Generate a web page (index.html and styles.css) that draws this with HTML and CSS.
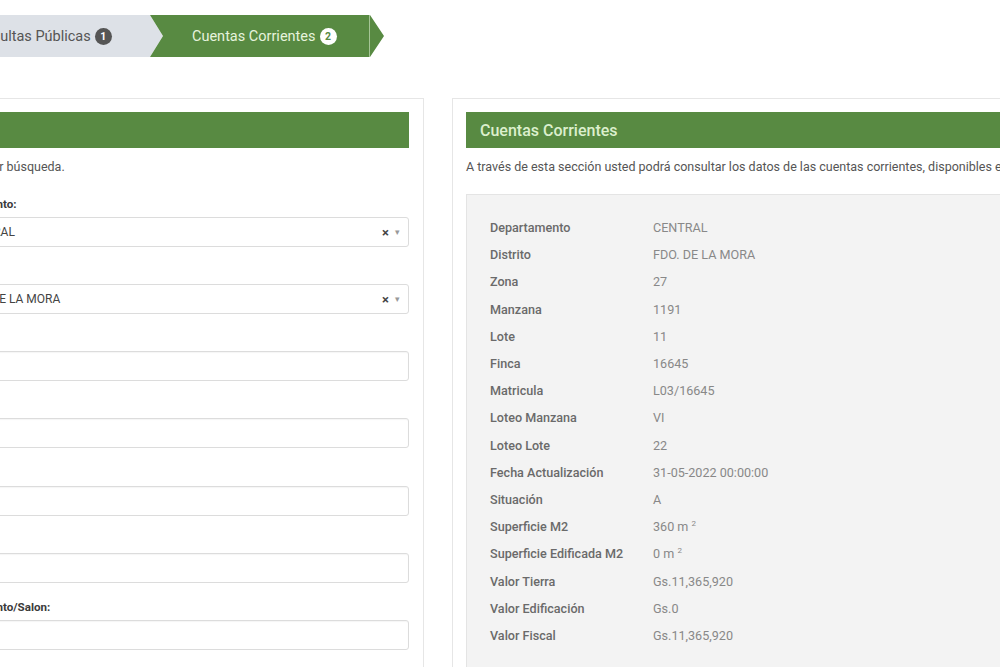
FILE: index.html
```html
<!DOCTYPE html>
<html lang="es">
<head>
<meta charset="utf-8">
<title>Cuentas Corrientes</title>
<link rel="stylesheet" href="styles.css">
</head>
<body>
<div class="page">
  <nav class="steps">
    <div class="step step-done">Consultas Públicas <span class="badge badge-dark">1</span></div>
    <div class="step step-active">Cuentas Corrientes <span class="badge badge-light">2</span></div>
  </nav>

  <div class="columns">
    <section class="card card-left">
      <div class="card-head"><h2>Filtros</h2></div>
      <p class="desc desc-left">Datos para filtrar búsqueda.</p>

      <div class="group">
        <label>Departamento:</label>
        <div class="select"><span>CENTRAL</span><span class="sel-icons"><span class="clear">×</span><span class="caret">▾</span></span></div>
      </div>
      <div class="group">
        <label>Distrito:</label>
        <div class="select"><span>FDO. DE LA MORA</span><span class="sel-icons"><span class="clear">×</span><span class="caret">▾</span></span></div>
      </div>
      <div class="group">
        <label>Zona:</label>
        <div class="input"></div>
      </div>
      <div class="group">
        <label>Manzana:</label>
        <div class="input"></div>
      </div>
      <div class="group g-wide">
        <label>Lote:</label>
        <div class="input"></div>
      </div>
      <div class="group">
        <label>Finca:</label>
        <div class="input"></div>
      </div>
      <div class="group">
        <label>Departamento/Salon:</label>
        <div class="input"></div>
      </div>
    </section>

    <section class="card card-right">
      <div class="card-head"><h2>Cuentas Corrientes</h2></div>
      <p class="desc">A través de esta sección usted podrá consultar los datos de las cuentas corrientes, disponibles en el sistema.</p>
      <div class="data">
        <div class="row"><span class="k">Departamento</span><span class="v">CENTRAL</span></div>
        <div class="row"><span class="k">Distrito</span><span class="v">FDO. DE LA MORA</span></div>
        <div class="row"><span class="k">Zona</span><span class="v">27</span></div>
        <div class="row"><span class="k">Manzana</span><span class="v">1191</span></div>
        <div class="row"><span class="k">Lote</span><span class="v">11</span></div>
        <div class="row"><span class="k">Finca</span><span class="v">16645</span></div>
        <div class="row"><span class="k">Matricula</span><span class="v">L03/16645</span></div>
        <div class="row"><span class="k">Loteo Manzana</span><span class="v">VI</span></div>
        <div class="row"><span class="k">Loteo Lote</span><span class="v">22</span></div>
        <div class="row"><span class="k">Fecha Actualización</span><span class="v">31-05-2022 00:00:00</span></div>
        <div class="row"><span class="k">Situación</span><span class="v">A</span></div>
        <div class="row"><span class="k">Superficie M2</span><span class="v">360 m <sup>2</sup></span></div>
        <div class="row"><span class="k">Superficie Edificada M2</span><span class="v">0 m <sup>2</sup></span></div>
        <div class="row"><span class="k">Valor Tierra</span><span class="v">Gs.11,365,920</span></div>
        <div class="row"><span class="k">Valor Edificación</span><span class="v">Gs.0</span></div>
        <div class="row"><span class="k">Valor Fiscal</span><span class="v">Gs.11,365,920</span></div>
      </div>
    </section>
  </div>
</div>
</body>
</html>
```

FILE: styles.css
```css
* { box-sizing: border-box; }
html, body {
  margin: 0;
  padding: 0;
  background: #ffffff;
  overflow: hidden;
  width: 1000px;
  height: 667px;
}
body {
  font-family: Roboto, "Liberation Sans", Arial, sans-serif;
  color: #555;
}
.page {
  margin-left: -78px;
  padding-top: 15px;
}

/* steps */
.steps {
  display: flex;
  height: 42px;
}
.step {
  display: flex;
  align-items: center;
  font-size: 14.5px;
  height: 42px;
  position: relative;
}
.step-done {
  background: #dde1e7;
  color: #555;
  width: 242px;
  padding-left: 45px;
  clip-path: polygon(0 0, 228px 0, 241px 50%, 228px 100%, 0 100%);
}
.step-active {
  background: #588a42;
  color: #e6f3dc;
  width: 234px;
  margin-left: -14px;
  padding-left: 42px;
  clip-path: polygon(0 0, 220px 0, 234px 50%, 220px 100%, 0 100%, 13px 50%);
}
.step-active::after {
  content: "";
  position: absolute;
  left: 219px;
  top: 0;
  bottom: 0;
  width: 1px;
  background: #a5c596;
}
.badge {
  display: inline-flex;
  align-items: center;
  justify-content: center;
  width: 17px;
  height: 17px;
  border-radius: 50%;
  font-size: 10.5px;
  font-weight: 700;
  margin-left: 4px;
}
.badge-dark { background: #555; color: #fff; }
.badge-light { background: #fff; color: #588a42; }

/* columns */
.columns {
  display: flex;
  gap: 28px;
  margin-top: 41px;
  align-items: flex-start;
}
.card {
  border: 1px solid #e6e6e6;
  background: #fff;
  padding: 13px 14px 0 13px;
  height: 620px;
}
.card-left { width: 502px; flex: none; }
.card-right { width: 620px; flex: none; }

.card-head {
  background: #588a42;
  height: 36px;
  display: flex;
  align-items: center;
  padding-left: 14px;
}
.card-head h2 {
  margin: 0;
  font-size: 16px;
  font-weight: 500;
  color: #dcefcd;
}
.desc {
  margin: 10px 0 18px;
  font-size: 12.5px;
  line-height: 18px;
  color: #555;
  white-space: nowrap;
}
.desc-left {
  margin-left: -25px;
  margin-bottom: 19px;
}

/* form */
.group { margin-bottom: 15px; }
.group.g-wide { padding-top: 1px; }
.group label {
  display: block;
  font-size: 11.6px;
  font-weight: 700;
  color: #3a3a3a;
  line-height: 18px;
  margin-bottom: 4px;
  margin-left: 3px;
}
.select, .input {
  height: 30px;
  border: 1px solid #dcdcdc;
  border-radius: 3px;
  background: #fff;
}
.select {
  display: flex;
  align-items: center;
  justify-content: space-between;
  padding: 0 8px 0 26px;
  font-size: 12px;
  color: #444;
}
.input { box-shadow: inset 0 1px 1px rgba(0,0,0,0.04); }
.sel-icons { display: flex; align-items: center; gap: 6px; }
.clear { font-size: 13px; font-weight: 700; color: #444; }
.caret { font-size: 9px; color: #999; }

/* data */
.data {
  background: #f3f3f3;
  border: 1px solid #e4e4e4;
  padding: 19px 23px;
  height: 600px;
}
.row {
  display: flex;
  height: 27.2px;
  align-items: center;
  font-size: 12.6px;
}
.k {
  width: 163px;
  color: #6a6a6a;
  font-weight: 500;
  flex: none;
}
.v { color: #888; }
.v sup { font-size: 8px; }
```
